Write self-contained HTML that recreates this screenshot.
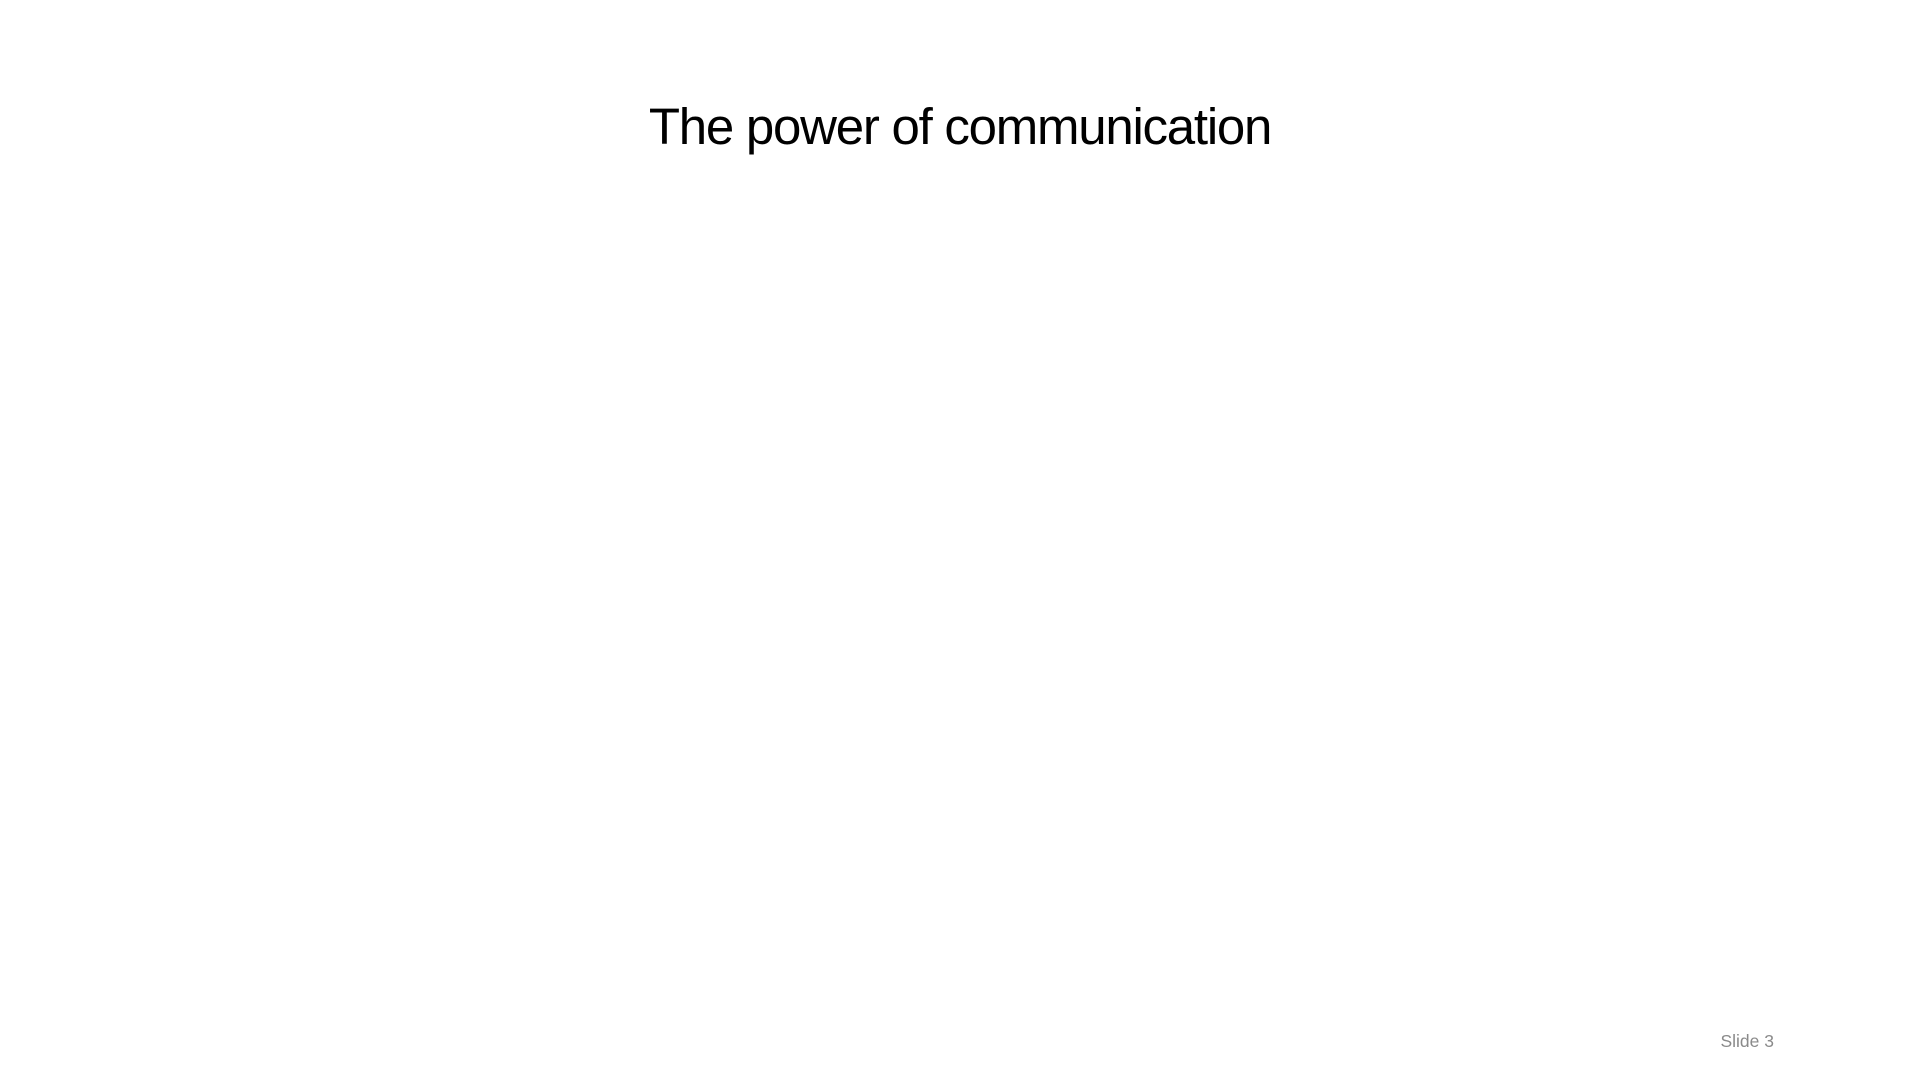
<!DOCTYPE html>
<html>
<head>
<meta charset="utf-8">
<style>
  html,body{margin:0;padding:0;background:#fff;}
  body{width:1920px;height:1080px;position:relative;overflow:hidden;font-family:"Liberation Sans",Arial,sans-serif;}
  .title{position:absolute;left:0;width:1920px;top:101px;text-align:center;font-size:51px;line-height:1;color:#000;letter-spacing:-1.25px;}
  .num{position:absolute;right:146px;top:1033px;font-size:17.5px;line-height:1;color:#8a8a8a;}
</style>
</head>
<body>
  <div class="title">The power of communication</div>
  <div class="num">Slide 3</div>
</body>
</html>
